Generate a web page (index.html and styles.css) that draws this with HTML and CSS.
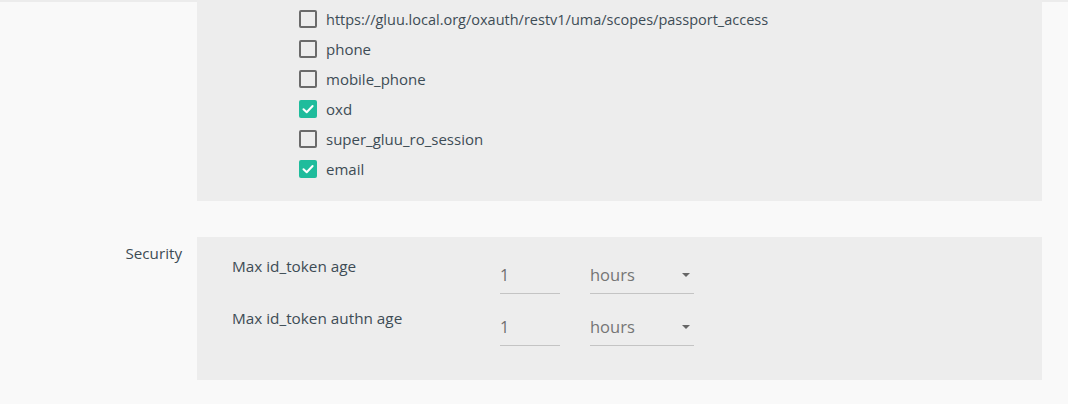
FILE: index.html
```html
<!DOCTYPE html>
<html>
<head>
<meta charset="utf-8">
<link rel="stylesheet" href="styles.css">
</head>
<body>
<div class="topline"></div>
<div class="page">
  <div class="row">
    <div class="label"></div>
    <div class="panel scopes">
      <ul class="checklist">
        <li><span class="cb"></span><span class="txt url">https://gluu.local.org/oxauth/restv1/uma/scopes/passport_access</span></li>
        <li><span class="cb"></span><span class="txt">phone</span></li>
        <li><span class="cb"></span><span class="txt">mobile_phone</span></li>
        <li><span class="cb on"><svg viewBox="0 0 18 18" width="18" height="18"><path d="M4.5 9.2 L7.7 12.3 L13.6 6" fill="none" stroke="#fff" stroke-width="2" stroke-linecap="round" stroke-linejoin="round"/></svg></span><span class="txt">oxd</span></li>
        <li><span class="cb"></span><span class="txt">super_gluu_ro_session</span></li>
        <li><span class="cb on"><svg viewBox="0 0 18 18" width="18" height="18"><path d="M4.5 9.2 L7.7 12.3 L13.6 6" fill="none" stroke="#fff" stroke-width="2" stroke-linecap="round" stroke-linejoin="round"/></svg></span><span class="txt">email</span></li>
      </ul>
    </div>
  </div>
  <div class="row security">
    <div class="label">Security</div>
    <div class="panel fields">
      <div class="field">
        <div class="fname">Max id_token age</div>
        <div class="num">1</div>
        <div class="sel"><span>hours</span><span class="arrow"></span></div>
      </div>
      <div class="field">
        <div class="fname">Max id_token authn age</div>
        <div class="num">1</div>
        <div class="sel"><span>hours</span><span class="arrow"></span></div>
      </div>
    </div>
  </div>
</div>
</body>
</html>
```
FILE: styles.css
```css
* { box-sizing: border-box; }
html, body { margin: 0; padding: 0; }
body {
  background: #f9f9f9;
  font-family: "Open Sans", "Liberation Sans", sans-serif;
  font-size: 15px;
  color: #3d4c55;
  width: 1068px;
  height: 404px;
  overflow: hidden;
}
.topline { height: 2px; background: #ececec; }
.page { display: flex; flex-direction: column; gap: 36px; }
.row { display: flex; }
.label {
  width: 197px;
  flex: none;
  text-align: right;
  padding-right: 15px;
  padding-top: 5px;
  line-height: 22px;
  font-size: 15.2px;
}
.panel { width: 845px; background: #ededed; }
.scopes { margin-top: -2px; padding: 4px 0 17px 102px; }
.checklist { list-style: none; margin: 0; padding: 0; }
.checklist li { height: 30px; display: flex; align-items: center; }
.txt.url { font-size: 14.5px; }
.cb {
  width: 18px; height: 18px; flex: none;
  border: 2px solid #6b6b6b;
  border-radius: 2px;
  margin-right: 9px;
}
.cb.on { border: none; background: #1fbc9c; }
.cb svg { display: block; }
.fields { padding: 17px 0 34px 35px; display: flex; flex-direction: column; gap: 12px; }
.field { display: flex; height: 40px; }
.fname { width: 268px; line-height: 24px; font-size: 15.3px; }
.num {
  width: 60px; border-bottom: 1px solid #c4c4c4;
  padding-top: 10px; line-height: 22px; color: #6f6f6f; font-size: 16px;
}
.sel {
  width: 104px; margin-left: 30px; border-bottom: 1px solid #c4c4c4;
  padding-top: 10px; line-height: 22px; color: #757575; font-size: 16.5px;
  display: flex; justify-content: space-between; align-items: flex-start;
}
.arrow {
  width: 0; height: 0; margin-top: 9px; margin-right: 4px;
  border-left: 4px solid transparent; border-right: 4px solid transparent;
  border-top: 4px solid #666;
}
```
